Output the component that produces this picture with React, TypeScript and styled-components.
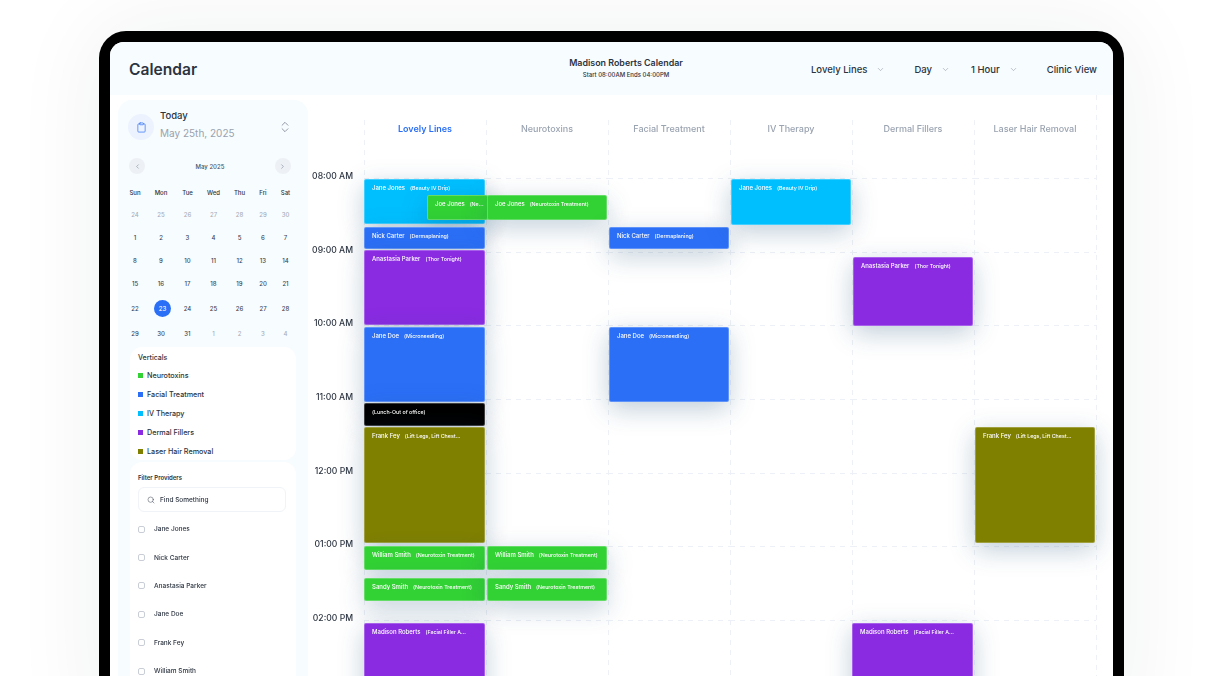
import React from 'react'
import styled, { createGlobalStyle } from 'styled-components'
import { ChevronDown, ChevronLeft, ChevronRight, ChevronsUpDown, Clipboard, Search } from 'lucide-react'

const HOUR = 73.7
const BOARD_TOP = 178
const LINE = '#edf0f6'

const colors = {
  blue: '#2b6ff7',
  sky: '#00bfff',
  green: '#32d134',
  purple: '#8a2be2',
  olive: '#808000',
  black: '#000000',
}

type Tone = keyof typeof colors

interface Booking {
  top: number
  bottom: number
  name?: string
  note: string
  tone: Tone
  left?: number
  right?: number
}

const columns: { title: string; bookings: Booking[] }[] = [
  {
    title: 'Lovely Lines',
    bookings: [
      { top: 179, bottom: 224, name: 'Jane Jones', note: '(Beauty IV Drip)', tone: 'sky' },
      { top: 195, bottom: 220, name: 'Joe Jones', note: '(Ne...', tone: 'green', left: 63, right: -2 },
      { top: 227, bottom: 249, name: 'Nick Carter', note: '(Dermaplaning)', tone: 'blue' },
      { top: 250, bottom: 325, name: 'Anastasia Parker', note: '(Thor Tonight)', tone: 'purple' },
      { top: 327, bottom: 402, name: 'Jane Doe', note: '(Microneedling)', tone: 'blue' },
      { top: 403, bottom: 426, note: '(Lunch-Out of office)', tone: 'black' },
      { top: 427, bottom: 543, name: 'Frank Fey', note: '(Lift Legs, Lift Chest...', tone: 'olive' },
      { top: 546, bottom: 570, name: 'William Smith', note: '(Neurotoxin Treatment)', tone: 'green' },
      { top: 578, bottom: 601, name: 'Sandy Smith', note: '(Neurotoxin Treatment)', tone: 'green' },
      { top: 623, bottom: 760, name: 'Madison Roberts', note: '(Facial Filler A...', tone: 'purple' },
    ],
  },
  {
    title: 'Neurotoxins',
    bookings: [
      { top: 195, bottom: 220, name: 'Joe Jones', note: '(Neurotoxin Treatment)', tone: 'green', left: 1 },
      { top: 546, bottom: 570, name: 'William Smith', note: '(Neurotoxin Treatment)', tone: 'green', left: 1 },
      { top: 578, bottom: 601, name: 'Sandy Smith', note: '(Neurotoxin Treatment)', tone: 'green', left: 1 },
    ],
  },
  {
    title: 'Facial Treatment',
    bookings: [
      { top: 227, bottom: 249, name: 'Nick Carter', note: '(Dermaplaning)', tone: 'blue', left: 1 },
      { top: 327, bottom: 402, name: 'Jane Doe', note: '(Microneedling)', tone: 'blue', left: 1 },
    ],
  },
  {
    title: 'IV Therapy',
    bookings: [{ top: 179, bottom: 225, name: 'Jane Jones', note: '(Beauty IV Drip)', tone: 'sky', left: 1 }],
  },
  {
    title: 'Dermal Fillers',
    bookings: [
      { top: 257, bottom: 326, name: 'Anastasia Parker', note: '(Thor Tonight)', tone: 'purple', left: 1 },
      { top: 623, bottom: 760, name: 'Madison Roberts', note: '(Facial Filler A...', tone: 'purple' },
    ],
  },
  {
    title: 'Laser Hair Removal',
    bookings: [{ top: 427, bottom: 543, name: 'Frank Fey', note: '(Lift Legs, Lift Chest...', tone: 'olive', left: 1 }],
  },
]

const hours = ['08:00 AM', '09:00 AM', '10:00 AM', '11:00 AM', '12:00 PM', '01:00 PM', '02:00 PM']
const weekdays = ['Sun', 'Mon', 'Tue', 'Wed', 'Thu', 'Fri', 'Sat']
const weeks = [
  ['24', '25', '26', '27', '28', '29', '30'],
  ['1', '2', '3', '4', '5', '6', '7'],
  ['8', '9', '10', '11', '12', '13', '14'],
  ['15', '16', '17', '18', '19', '20', '21'],
  ['22', '23', '24', '25', '26', '27', '28'],
  ['29', '30', '31', '1', '2', '3', '4'],
]
const verticals: { label: string; tone: Tone }[] = [
  { label: 'Neurotoxins', tone: 'green' },
  { label: 'Facial Treatment', tone: 'blue' },
  { label: 'IV Therapy', tone: 'sky' },
  { label: 'Dermal Fillers', tone: 'purple' },
  { label: 'Laser Hair Removal', tone: 'olive' },
]
const providers = ['Jane Jones', 'Nick Carter', 'Anastasia Parker', 'Jane Doe', 'Frank Fey', 'William Smith']
const filters = [
  { label: 'Lovely Lines', after: 29 },
  { label: 'Day', after: 21 },
  { label: '1 Hour', after: 29 },
]

const isMuted = (week: number, day: number) => week === 0 || (week === 5 && day > 2)

const App = () => {
  return (
    <Page>
      <GlobalStyle />
      <Frame>
        <Screen>
          <Header>
            <Heading>Calendar</Heading>
            <OwnerBlock>
              <OwnerName>Madison Roberts Calendar</OwnerName>
              <OwnerHours>Start 08:00AM Ends 04:00PM</OwnerHours>
            </OwnerBlock>
            <Controls>
              {filters.map((filter) => (
                <Control key={filter.label} $after={filter.after}>
                  {filter.label}
                  <ChevronDown size={9} strokeWidth={1.5} color="#8d96a3" />
                </Control>
              ))}
              <ViewLabel>Clinic View</ViewLabel>
            </Controls>
          </Header>
          <Body>
            <Sidebar>
              <TodayRow>
                <TodayIcon>
                  <Clipboard size={11} strokeWidth={1.5} color={colors.blue} />
                </TodayIcon>
                <TodayText>
                  <TodayTitle>Today</TodayTitle>
                  <TodayDate>May 25th, 2025</TodayDate>
                </TodayText>
                <ChevronsUpDown size={14} strokeWidth={1.2} color="#667080" />
              </TodayRow>
              <MonthNav>
                <NavButton>
                  <ChevronLeft size={7} color="#7d8794" />
                </NavButton>
                <MonthName>May 2025</MonthName>
                <NavButton>
                  <ChevronRight size={7} color="#7d8794" />
                </NavButton>
              </MonthNav>
              <MonthGrid>
                {weekdays.map((day) => (
                  <Weekday key={day}>{day}</Weekday>
                ))}
                {weeks.map((week, w) =>
                  week.map((day, d) => (
                    <DayCell key={`${w}-${d}`} $tall={w === 4}>
                      <DayNumber $muted={isMuted(w, d)} $selected={w === 4 && d === 1}>
                        {day}
                      </DayNumber>
                    </DayCell>
                  ))
                )}
              </MonthGrid>
              <LegendPanel>
                <PanelTitle>Verticals</PanelTitle>
                {verticals.map((item) => (
                  <LegendRow key={item.label}>
                    <Swatch $tone={item.tone} />
                    {item.label}
                  </LegendRow>
                ))}
              </LegendPanel>
              <ProviderPanel>
                <ProviderTitle>Filter Providers</ProviderTitle>
                <SearchBox>
                  <Search size={8} strokeWidth={1.5} color="#3a4350" />
                  Find Something
                </SearchBox>
                {providers.map((provider) => (
                  <ProviderRow key={provider}>
                    <Checkbox />
                    {provider}
                  </ProviderRow>
                ))}
              </ProviderPanel>
            </Sidebar>
            <Schedule>
              <TimeColumn>
                {hours.map((hour) => (
                  <TimeLabel key={hour}>{hour}</TimeLabel>
                ))}
              </TimeColumn>
              <Board>
                {columns.map((column, index) => (
                  <Column key={column.title}>
                    <ColumnHead $active={index === 0}>{column.title}</ColumnHead>
                    <Slots>
                      {hours.map((hour) => (
                        <HourSlot key={hour} />
                      ))}
                      {column.bookings.map((booking) => (
                        <Event
                          key={`${booking.top}-${booking.note}`}
                          $top={booking.top - BOARD_TOP}
                          $height={booking.bottom - booking.top}
                          $left={booking.left ?? 0}
                          $right={booking.right ?? 1}
                          $tone={booking.tone}
                        >
                          {booking.name && <EventName>{booking.name}</EventName>}
                          <EventNote>{booking.note}</EventNote>
                        </Event>
                      ))}
                    </Slots>
                  </Column>
                ))}
              </Board>
            </Schedule>
          </Body>
        </Screen>
      </Frame>
    </Page>
  )
}

export default App

const GlobalStyle = createGlobalStyle`
  html, body {
    margin: 0;
    padding: 0;
    background: #fff;
  }
  * {
    box-sizing: border-box;
  }
  body {
    font-family: Inter, "Liberation Sans", sans-serif;
    color: #2c3440;
  }
`

const Page = styled.div`
  width: 1216px;
  height: 676px;
  padding: 31px 0 0 99px;
  overflow: hidden;
  background: #fff;
`

const Frame = styled.div`
  width: 1025px;
  height: 700px;
  padding: 11px;
  background: #000;
  border-radius: 27px;
  box-shadow: 0 0 90px rgba(30, 40, 60, 0.07);
`

const Screen = styled.div`
  height: 100%;
  background: #fff;
  border-radius: 14px;
  overflow: hidden;
  filter: blur(0.6px);
`

const Header = styled.header`
  position: relative;
  display: flex;
  align-items: center;
  justify-content: space-between;
  height: 53px;
  padding: 2px 16px 0 19px;
  background: #f7fcff;
`

const Heading = styled.h1`
  margin: 0;
  font-size: 15.6px;
  font-weight: 600;
`

const OwnerBlock = styled.div`
  position: absolute;
  top: 15px;
  left: 416px;
  width: 200px;
  text-align: center;
`

const OwnerName = styled.div`
  font-size: 8.9px;
  font-weight: 600;
  line-height: 11px;
`

const OwnerHours = styled.div`
  margin-top: 3px;
  font-size: 6px;
  font-weight: 500;
  line-height: 8px;
`

const Controls = styled.div`
  display: flex;
  align-items: center;
  font-size: 9.5px;
  font-weight: 500;
`

const Control = styled.div<{ $after: number }>`
  display: flex;
  align-items: center;
  gap: 9px;
  margin-right: ${({ $after }) => $after}px;
  white-space: nowrap;
`

const ViewLabel = styled.div`
  white-space: nowrap;
`

const Body = styled.div`
  display: flex;
  align-items: flex-start;
`

const Sidebar = styled.aside`
  flex: none;
  width: 190px;
  height: 620px;
  margin: 5px 0 0 8px;
  padding: 14px 12px 0 10px;
  background: #f7fcff;
  border-radius: 14px;
`

const TodayRow = styled.div`
  display: flex;
  align-items: center;
  gap: 6px;
  height: 26px;
  padding-right: 4px;
`

const TodayIcon = styled.div`
  display: flex;
  align-items: center;
  justify-content: center;
  width: 26px;
  height: 26px;
  background: #ecf2fe;
  border-radius: 50%;
`

const TodayText = styled.div`
  flex: 1;
`

const TodayTitle = styled.div`
  font-size: 9.5px;
  font-weight: 500;
  line-height: 12px;
  margin-top: -5px;
`

const TodayDate = styled.div`
  margin-top: 5px;
  font-size: 10px;
  color: #9aa2ad;
  line-height: 12px;
`

const MonthNav = styled.div`
  display: flex;
  align-items: center;
  justify-content: space-between;
  margin: 18px 5px 0 1px;
`

const NavButton = styled.div`
  display: flex;
  align-items: center;
  justify-content: center;
  width: 16px;
  height: 16px;
  background: #edf1f6;
  border-radius: 50%;
`

const MonthName = styled.div`
  font-size: 6px;
  font-weight: 500;
  color: #4a5360;
`

const MonthGrid = styled.div`
  display: grid;
  grid-template-columns: 26px 26px 27px 25px 27px 20px 25px;
  margin: 10px 0 0 -6px;
`

const Weekday = styled.div`
  height: 19px;
  font-size: 6px;
  font-weight: 500;
  line-height: 18px;
  text-align: center;
`

const DayCell = styled.div<{ $tall?: boolean }>`
  display: flex;
  align-items: center;
  justify-content: center;
  height: ${({ $tall }) => ($tall ? 27 : 23)}px;
`

const DayNumber = styled.span<{ $muted?: boolean; $selected?: boolean }>`
  display: flex;
  align-items: center;
  justify-content: center;
  font-size: 6px;
  font-weight: 500;
  color: ${({ $muted, $selected }) => ($selected ? '#fff' : $muted ? '#a7aeb8' : '#3b4450')};
  ${({ $selected }) =>
    $selected
      ? `width: 17px; height: 17px; margin-left: 3px; background: ${colors.blue}; border-radius: 50%;`
      : ''}
`

const LegendPanel = styled.section`
  width: 166px;
  height: 113px;
  margin: 2px 0 0 2px;
  padding: 6px 8px 0;
  background: #fff;
  border-radius: 12px;
`

const PanelTitle = styled.div`
  font-size: 7px;
  font-weight: 500;
  line-height: 10px;
  margin-bottom: 3px;
`

const LegendRow = styled.div`
  display: flex;
  align-items: center;
  gap: 4px;
  height: 19px;
  font-size: 7.2px;
  font-weight: 500;
`

const Swatch = styled.span<{ $tone: Tone }>`
  width: 5px;
  height: 5px;
  background: ${({ $tone }) => colors[$tone]};
`

const ProviderPanel = styled.section`
  width: 166px;
  margin: 2px 0 0 2px;
  padding: 11px 8px 0;
  background: #fff;
  border-radius: 12px 12px 0 0;
  height: 240px;
`

const ProviderTitle = styled.div`
  font-size: 6px;
  font-weight: 600;
  line-height: 9px;
`

const SearchBox = styled.div`
  display: flex;
  align-items: center;
  gap: 5px;
  height: 25px;
  margin: 5px 2px 3px 0;
  padding-left: 8px;
  border: 1px solid #f0f3f7;
  border-radius: 6px;
  font-size: 6.5px;
  font-weight: 500;
`

const ProviderRow = styled.div`
  display: flex;
  align-items: center;
  gap: 9px;
  height: 28.4px;
  font-size: 6.5px;
  font-weight: 500;
`

const Checkbox = styled.span`
  width: 7px;
  height: 7px;
  border: 1px solid #c9ced6;
  border-radius: 2px;
`

const Schedule = styled.main`
  display: flex;
  flex: 1;
  align-items: flex-start;
`

const TimeColumn = styled.div`
  flex: none;
  width: 56px;
  padding-top: 75px;
`

const TimeLabel = styled.div`
  height: ${HOUR}px;
  padding-right: 11px;
  font-size: 8.6px;
  font-weight: 500;
  line-height: 12px;
  text-align: right;
  white-space: nowrap;
`

const Board = styled.div`
  display: grid;
  grid-template-columns: repeat(6, 122px);
  width: 733px;
  padding: 25px 1px 0 0;
  background: linear-gradient(to bottom, ${LINE} 55%, transparent 0) right top / 1px 10px repeat-y;
  background-origin: border-box;
`

const Column = styled.div`
  min-width: 0;
  background: linear-gradient(to bottom, ${LINE} 55%, transparent 0) left top / 1px 10px repeat-y;
`

const ColumnHead = styled.div<{ $active?: boolean }>`
  height: 58px;
  padding-top: 3px;
  font-size: 9px;
  font-weight: ${({ $active }) => ($active ? 600 : 500)};
  line-height: 12px;
  text-align: center;
  white-space: nowrap;
  color: ${({ $active }) => ($active ? colors.blue : '#9aa3b0')};
`

const Slots = styled.div`
  position: relative;
`

const HourSlot = styled.div`
  height: ${HOUR}px;
  background: linear-gradient(to right, ${LINE} 55%, transparent 0) left top / 10px 1px repeat-x;
`

const Event = styled.div<{ $top: number; $height: number; $left: number; $right: number; $tone: Tone }>`
  position: absolute;
  z-index: 1;
  top: ${({ $top }) => $top}px;
  left: ${({ $left }) => $left}px;
  right: ${({ $right }) => $right}px;
  height: ${({ $height }) => $height}px;
  padding: 3px 7px;
  overflow: hidden;
  background: ${({ $tone }) => colors[$tone]};
  border: 1px solid rgba(255, 255, 255, 0.25);
  border-radius: 2px;
  box-shadow: 0 7px 26px rgba(30, 80, 120, 0.28);
  color: #fff;
  font-size: 6px;
  font-weight: 500;
  line-height: 9px;
  white-space: nowrap;
`

const EventName = styled.span`
  margin-right: 5px;
`

const EventNote = styled.span`
  font-size: 5.3px;
`
